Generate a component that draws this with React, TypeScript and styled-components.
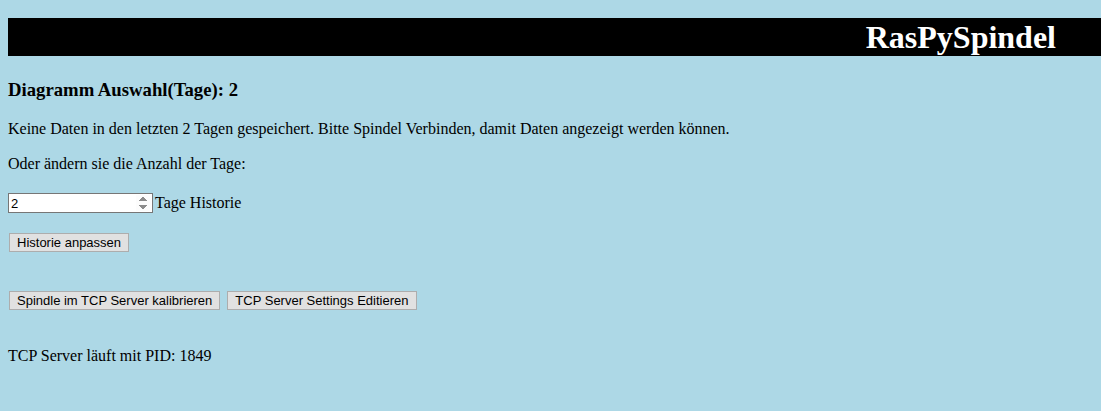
import React from "react";
import styled, { createGlobalStyle } from "styled-components";

const Global = createGlobalStyle`
  html, body { margin: 0; padding: 0; background: #add8e6; }
  body { font-family: "Liberation Serif", "Times New Roman", serif; font-size: 16px; color: #000; }
`;

const Page = styled.div`
  padding: 18px 0 0 8px;
  display: flex;
  flex-direction: column;
  align-items: flex-start;
`;

const Header = styled.header`
  align-self: stretch;
  background: #000;
  height: 38px;
  display: flex;
  align-items: center;
  justify-content: flex-end;
  padding-right: 45px;
`;

const Title = styled.h1`
  margin: 0;
  color: #fff;
  font-size: 32px;
  font-weight: bold;
  line-height: 38px;
`;

const Heading = styled.h3`
  margin: 23px 0 0;
  font-size: 18.72px;
  line-height: 22px;
  font-weight: bold;
`;

const Para = styled.p<{ $top: number }>`
  margin: ${(p) => p.$top}px 0 0;
  line-height: 18px;
`;

const Row = styled.div<{ $top: number }>`
  margin-top: ${(p) => p.$top}px;
  display: flex;
  align-items: center;
  gap: 2px;
`;

const NumberInput = styled.input`
  box-sizing: border-box;
  width: 145px;
  height: 20px;
  border: 1px solid #767676;
  background: #fff;
  font-family: "Liberation Sans", Arial, sans-serif;
  font-size: 13px;
  padding: 0 1px 0 2px;
  margin: 0;
  &::-webkit-inner-spin-button,
  &::-webkit-outer-spin-button {
    opacity: 1;
    height: 16px;
  }
`;

const Label = styled.span`
  line-height: 18px;
`;

const Button = styled.button`
  box-sizing: border-box;
  height: 19px;
  margin: 0 0 0 1px;
  padding: 0 7px;
  background: #e1e1e1;
  border: 1px solid #adadad;
  font-family: "Liberation Sans", Arial, sans-serif;
  font-size: 13px;
  color: #000;
  line-height: 16px;
`;

const ButtonRow = styled.div`
  margin-top: 39px;
  display: flex;
  gap: 6px;
`;

export default function App() {
  return (
    <>
      <Global />
      <Page>
        <Header>
          <Title>RasPySpindel</Title>
        </Header>
        <Heading>Diagramm Auswahl(Tage): 2</Heading>
        <Para $top={19}>
          Keine Daten in den letzten 2 Tagen gespeichert. Bitte Spindel Verbinden, damit Daten angezeigt werden können.
        </Para>
        <Para $top={17}>Oder ändern sie die Anzahl der Tage:</Para>
        <Row $top={20}>
          <NumberInput type="number" defaultValue={2} />
          <Label>Tage Historie</Label>
        </Row>
        <Row $top={20}>
          <Button>Historie anpassen</Button>
        </Row>
        <ButtonRow>
          <Button>Spindle im TCP Server kalibrieren</Button>
          <Button>TCP Server Settings Editieren</Button>
        </ButtonRow>
        <Para $top={37}>TCP Server läuft mit PID: 1849</Para>
      </Page>
    </>
  );
}
